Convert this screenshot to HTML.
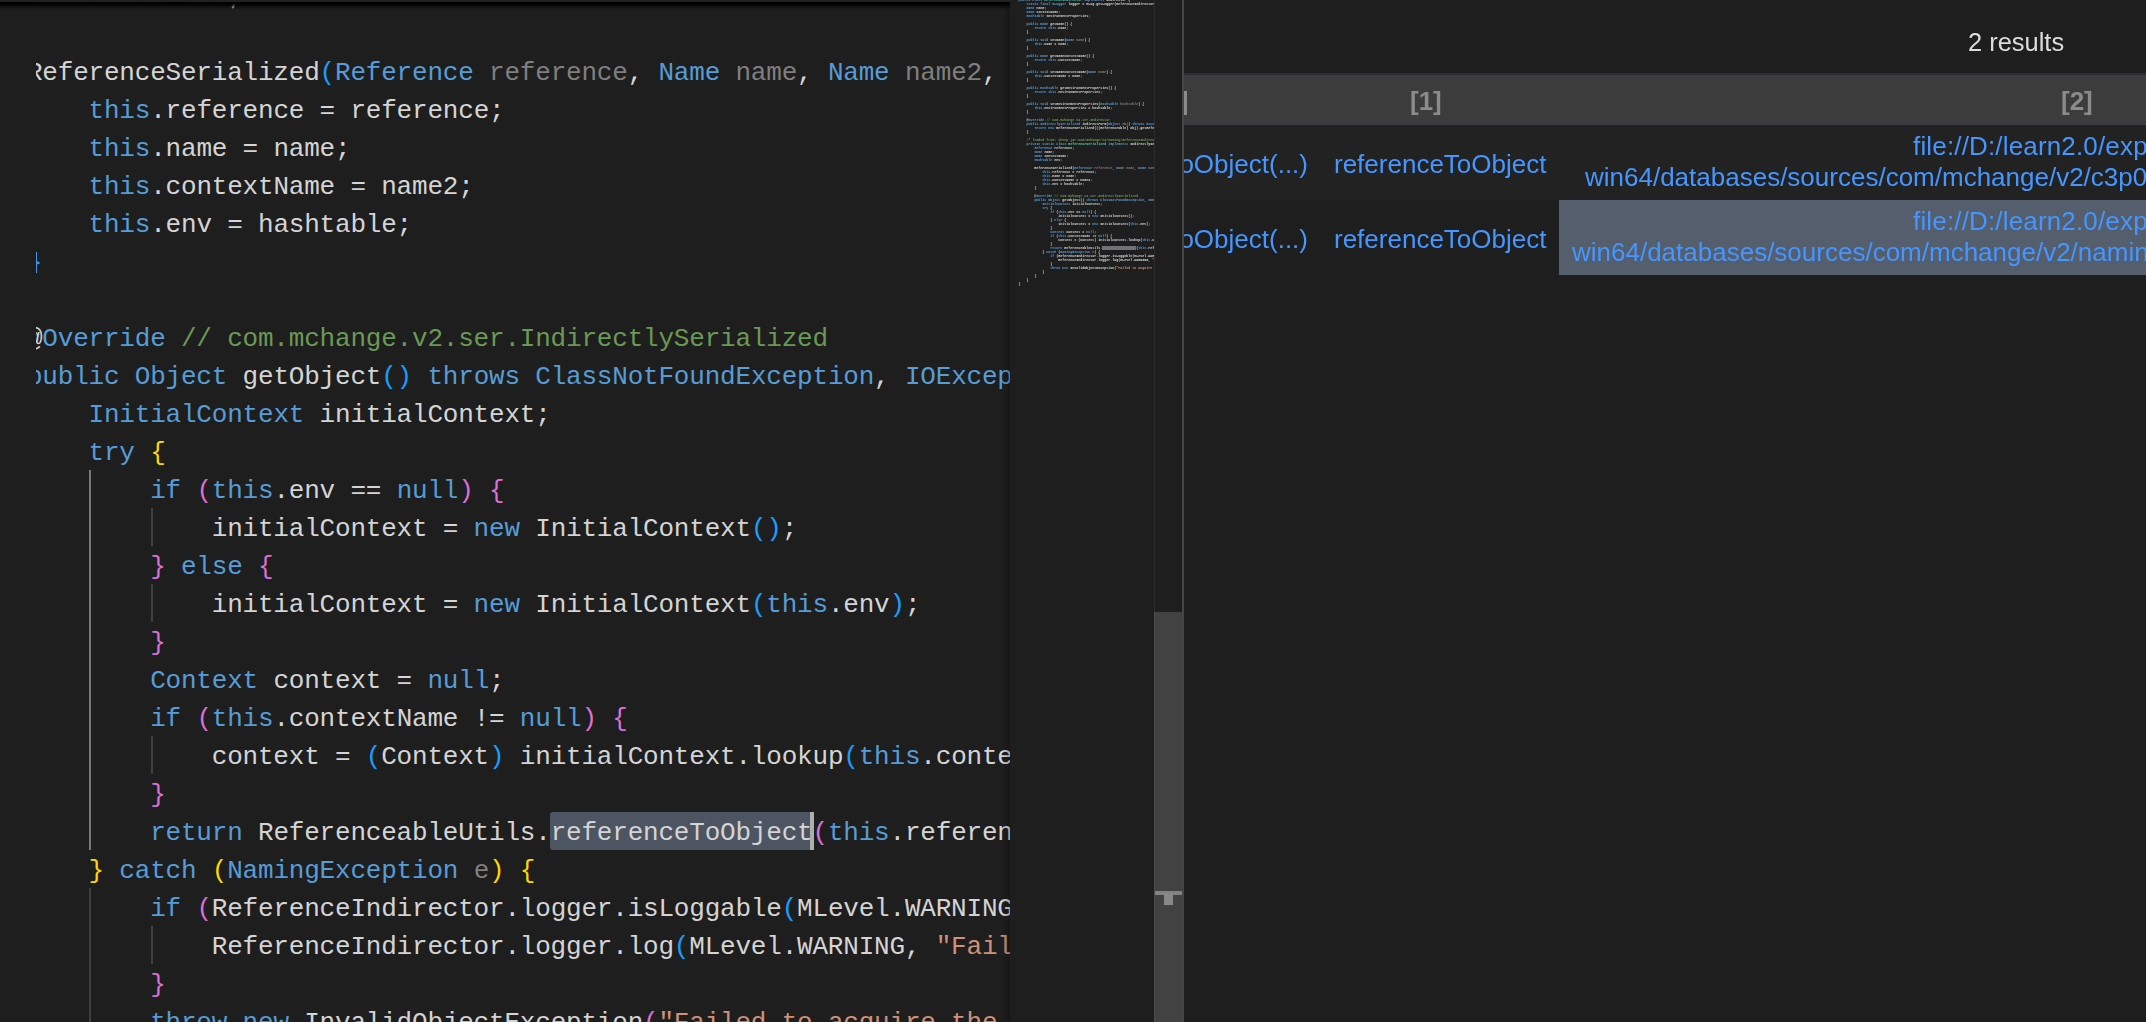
<!DOCTYPE html>
<html><head><meta charset="utf-8"><title>editor</title>
<style>
html,body{margin:0;padding:0;background:#1e1e1e;}
body{width:2146px;height:1022px;position:relative;overflow:hidden;font-family:"Liberation Sans",sans-serif;}
i{font-style:normal}
.k{color:#569cd6}.c{color:#6a9955}.s{color:#ce9178}.v{color:#7f7f7f}.t{color:#4ec9b0}
.g{color:#ffd700}.p{color:#da70d6}.b{color:#179fff}
#ed{position:absolute;left:36px;top:0;width:974px;height:1022px;overflow:hidden;}
#code{position:absolute;left:-132.3px;top:-21.75px;margin:0;
  font-family:"Liberation Mono",monospace;font-size:26px;letter-spacing:-0.2px;line-height:38px;color:#d4d4d4;white-space:pre;}
#code div{height:38px}
.gd{position:absolute;width:2px;background:#404040}
.ga{background:#787878}
#sel{position:absolute;left:550px;top:812px;width:262px;height:38px;background:#4d5562;border-radius:3px}
#cur{position:absolute;left:810px;top:812px;width:4px;height:38px;background:#aeafad}
#topst{position:absolute;left:0;top:0;width:1010px;height:2px;background:linear-gradient(#232323,#1f1f1f)}
#topsh{position:absolute;left:0;top:2px;width:1010px;height:8px;background:linear-gradient(rgba(0,0,0,1) 0%,rgba(0,0,0,0.97) 25%,rgba(0,0,0,0.6) 50%,rgba(0,0,0,0.2) 75%,rgba(0,0,0,0) 100%)}
#mmsh{position:absolute;left:1002px;top:2px;width:8px;height:1022px;background:linear-gradient(90deg,rgba(0,0,0,0),rgba(0,0,0,0.25))}
#mm{position:absolute;left:1010px;top:0;width:144px;height:1022px;overflow:hidden;background:#1e1e1e;will-change:transform}
#mmc{position:absolute;left:8.399999999999977px;top:-2.5px;margin:0;font-family:"Liberation Mono",monospace;font-size:3.333px;line-height:4px;color:#d4d4d4;white-space:pre;font-weight:bold}
#mmc .g,#mmc .p,#mmc .b{color:#d4d4d4}
#mmc div{height:4px}
#sb{position:absolute;left:1154px;top:0;width:1px;height:1022px;background:rgba(127,127,127,0.14)}
#sl{position:absolute;left:1154px;top:612px;width:28px;height:410px;background:#424242}
#mk1{position:absolute;left:1155px;top:891px;width:27px;height:4px;background:#828280}
#mk2{position:absolute;left:1164px;top:893px;width:9px;height:12px;background:#888}
#bd{position:absolute;left:1182px;top:0;width:2px;height:1022px;background:#464646}
#rp{position:absolute;left:1184px;top:0;width:962px;height:1022px;overflow:hidden;background:#1e1e1e;color:#4596ff;font-size:26px;white-space:nowrap;will-change:transform}
#rp div{position:absolute}
</style></head>
<body>
<div id="ed">
<div id="sel" style="left:514px"></div>
<div class="gd ga" style="left:53px;top:470px;height:380px"></div>
<div class="gd" style="left:53px;top:888px;height:134px"></div>
<div class="gd" style="left:115px;top:508px;height:38px"></div>
<div class="gd" style="left:115px;top:584px;height:38px"></div>
<div class="gd" style="left:115px;top:736px;height:38px"></div>
<div class="gd" style="left:115px;top:926px;height:38px"></div>
<div id="code"><div>        <i class="k">Hashtable </i>env;</div><div></div><div>        ReferenceSerialized<i class="b">(</i><i class="k">Reference </i><i class="v">reference</i>, <i class="k">Name </i><i class="v">name</i>, <i class="k">Name </i><i class="v">name2</i>, <i class="k">Hashtable </i><i class="v">hashtable</i><i class="b">) {</i></div><div>            <i class="k">this</i>.reference = reference;</div><div>            <i class="k">this</i>.name = name;</div><div>            <i class="k">this</i>.contextName = name2;</div><div>            <i class="k">this</i>.env = hashtable;</div><div>        <i class="b">}</i></div><div></div><div>        @<i class="k">Override </i><i class="c">// com.mchange.v2.ser.IndirectlySerialized</i></div><div>        <i class="k">public Object </i>getObject<i class="b">() </i><i class="k">throws ClassNotFoundException</i>, <i class="k">IOException </i><i class="b">{</i></div><div>            <i class="k">InitialContext </i>initialContext;</div><div>            <i class="k">try </i><i class="g">{</i></div><div>                <i class="k">if </i><i class="p">(</i><i class="k">this</i>.env == <i class="k">null</i><i class="p">) {</i></div><div>                    initialContext = <i class="k">new </i>InitialContext<i class="b">()</i>;</div><div>                <i class="p">} </i><i class="k">else </i><i class="p">{</i></div><div>                    initialContext = <i class="k">new </i>InitialContext<i class="b">(</i><i class="k">this</i>.env<i class="b">)</i>;</div><div>                <i class="p">}</i></div><div>                <i class="k">Context </i>context = <i class="k">null</i>;</div><div>                <i class="k">if </i><i class="p">(</i><i class="k">this</i>.contextName != <i class="k">null</i><i class="p">) {</i></div><div>                    context = <i class="b">(</i>Context<i class="b">) </i>initialContext.lookup<i class="b">(</i><i class="k">this</i>.contextName<i class="b">)</i>;</div><div>                <i class="p">}</i></div><div>                <i class="k">return </i>ReferenceableUtils.referenceToObject<i class="p">(</i><i class="k">this</i>.reference, <i class="k">this</i>.name, context, <i class="k">this</i>.env<i class="p">)</i>;</div><div>            <i class="g">} </i><i class="k">catch </i><i class="g">(</i><i class="k">NamingException </i><i class="v">e</i><i class="g">) {</i></div><div>                <i class="k">if </i><i class="p">(</i>ReferenceIndirector.logger.isLoggable<i class="b">(</i>MLevel.WARNING<i class="b">)</i><i class="p">) {</i></div><div>                    ReferenceIndirector.logger.log<i class="b">(</i>MLevel.WARNING, <i class="s">"Failed to acquire the Context necessary to lookup an Object."</i>, e<i class="b">)</i>;</div><div>                <i class="p">}</i></div><div>                <i class="k">throw new </i>InvalidObjectException<i class="p">(</i><i class="s">"Failed to acquire the Context necessary to lookup an Object: " </i>+ e.toString<i class="b">()</i><i class="p">)</i>;</div></div>
<div style="position:absolute;left:0;top:252px;width:1px;height:21px;background:#3f96e8"></div>
<div id="cur" style="left:774px"></div>
</div>
<div id="topst"></div><div id="topsh"></div><div id="mmsh"></div>
<div id="mm"><div id="mmc"><div><i class="k">public class </i><i class="t">ReferenceIndirector </i><i class="k">implements </i>Indirector <i class="g">{</i></div><div>    <i class="k">static final MLogger </i>logger = MLog.getLogger<i class="p">(</i>ReferenceIndirector.<i class="k">class</i><i class="p">)</i>;</div><div>    <i class="k">Name </i>name;</div><div>    <i class="k">Name </i>contextName;</div><div>    <i class="k">Hashtable </i>environmentProperties;</div><div></div><div>    <i class="k">public Name </i>getName<i class="p">() {</i></div><div>        <i class="k">return this</i>.name;</div><div>    <i class="p">}</i></div><div></div><div>    <i class="k">public void </i>setName<i class="p">(</i><i class="k">Name </i><i class="v">name</i><i class="p">) {</i></div><div>        <i class="k">this</i>.name = name;</div><div>    <i class="p">}</i></div><div></div><div>    <i class="k">public Name </i>getNameContextName<i class="p">() {</i></div><div>        <i class="k">return this</i>.contextName;</div><div>    <i class="p">}</i></div><div></div><div>    <i class="k">public void </i>setNameContextName<i class="p">(</i><i class="k">Name </i><i class="v">name</i><i class="p">) {</i></div><div>        <i class="k">this</i>.contextName = name;</div><div>    <i class="p">}</i></div><div></div><div>    <i class="k">public Hashtable </i>getEnvironmentProperties<i class="p">() {</i></div><div>        <i class="k">return this</i>.environmentProperties;</div><div>    <i class="p">}</i></div><div></div><div>    <i class="k">public void </i>setEnvironmentProperties<i class="p">(</i><i class="k">Hashtable </i><i class="v">hashtable</i><i class="p">) {</i></div><div>        <i class="k">this</i>.environmentProperties = hashtable;</div><div>    <i class="p">}</i></div><div></div><div>    @<i class="k">Override </i><i class="c">// com.mchange.v2.ser.Indirector</i></div><div>    <i class="k">public IndirectlySerialized </i>indirectForm<i class="p">(</i><i class="k">Object </i><i class="v">obj</i><i class="p">) </i><i class="k">throws Exception </i><i class="p">{</i></div><div>        <i class="k">return new </i>ReferenceSerialized<i class="b">(</i><i class="g">(</i><i class="p">(</i>Referenceable<i class="p">) </i>obj<i class="g">)</i>.getReference<i class="g">()</i>, <i class="k">this</i>.name, <i class="k">this</i>.contextName, <i class="k">this</i>.environmentProperties<i class="b">)</i>;</div><div>    <i class="p">}</i></div><div></div><div>    <i class="c">/* loaded from: sheep.jar:com/mchange/v2/naming/ReferenceIndirector$ReferenceSerialized.class */</i></div><div>    <i class="k">private static class </i><i class="t">ReferenceSerialized </i><i class="k">implements </i>IndirectlySerialized <i class="p">{</i></div><div>        <i class="k">Reference </i>reference;</div><div>        <i class="k">Name </i>name;</div><div>        <i class="k">Name </i>contextName;</div><div>        <i class="k">Hashtable </i>env;</div><div></div><div>        ReferenceSerialized<i class="b">(</i><i class="k">Reference </i><i class="v">reference</i>, <i class="k">Name </i><i class="v">name</i>, <i class="k">Name </i><i class="v">name2</i>, <i class="k">Hashtable </i><i class="v">hashtable</i><i class="b">) {</i></div><div>            <i class="k">this</i>.reference = reference;</div><div>            <i class="k">this</i>.name = name;</div><div>            <i class="k">this</i>.contextName = name2;</div><div>            <i class="k">this</i>.env = hashtable;</div><div>        <i class="b">}</i></div><div></div><div>        @<i class="k">Override </i><i class="c">// com.mchange.v2.ser.IndirectlySerialized</i></div><div>        <i class="k">public Object </i>getObject<i class="b">() </i><i class="k">throws ClassNotFoundException</i>, <i class="k">IOException </i><i class="b">{</i></div><div>            <i class="k">InitialContext </i>initialContext;</div><div>            <i class="k">try </i><i class="g">{</i></div><div>                <i class="k">if </i><i class="p">(</i><i class="k">this</i>.env == <i class="k">null</i><i class="p">) {</i></div><div>                    initialContext = <i class="k">new </i>InitialContext<i class="b">()</i>;</div><div>                <i class="p">} </i><i class="k">else </i><i class="p">{</i></div><div>                    initialContext = <i class="k">new </i>InitialContext<i class="b">(</i><i class="k">this</i>.env<i class="b">)</i>;</div><div>                <i class="p">}</i></div><div>                <i class="k">Context </i>context = <i class="k">null</i>;</div><div>                <i class="k">if </i><i class="p">(</i><i class="k">this</i>.contextName != <i class="k">null</i><i class="p">) {</i></div><div>                    context = <i class="b">(</i>Context<i class="b">) </i>initialContext.lookup<i class="b">(</i><i class="k">this</i>.contextName<i class="b">)</i>;</div><div>                <i class="p">}</i></div><div>                <i class="k">return </i>ReferenceableUtils.<span style="background:#707276;color:#707276">referenceToObject</span><i class="p">(</i><i class="k">this</i>.reference, <i class="k">this</i>.name, context, <i class="k">this</i>.env<i class="p">)</i>;</div><div>            <i class="g">} </i><i class="k">catch </i><i class="g">(</i><i class="k">NamingException </i><i class="v">e</i><i class="g">) {</i></div><div>                <i class="k">if </i><i class="p">(</i>ReferenceIndirector.logger.isLoggable<i class="b">(</i>MLevel.WARNING<i class="b">)</i><i class="p">) {</i></div><div>                    ReferenceIndirector.logger.log<i class="b">(</i>MLevel.WARNING, <i class="s">"Failed to acquire the Context necessary to lookup an Object."</i>, e<i class="b">)</i>;</div><div>                <i class="p">}</i></div><div>                <i class="k">throw new </i>InvalidObjectException<i class="p">(</i><i class="s">"Failed to acquire the Context necessary to lookup an Object: " </i>+ e.toString<i class="b">()</i><i class="p">)</i>;</div><div>            <i class="g">}</i></div><div>        <i class="b">}</i></div><div>    <i class="p">}</i></div><div><i class="g">}</i></div></div></div>
<div id="sl"></div><div id="sb"></div><div id="mk1"></div><div id="mk2"></div><div id="bd"></div>
<div id="rp"><div style="left:0;top:73px;width:962px;height:52px;background:#3c3c3c;border-top:2px solid #2d2f33;border-bottom:2px solid #393d41;box-sizing:border-box"></div>
<div style="left:0;top:125px;width:962px;height:75px;background:#222222"></div>
<div style="left:375px;top:200px;width:587px;height:75px;background:#545e6c"></div>
<div style="left:784px;top:22.6px;color:#dcdcdc;font-size:25.45px;line-height:38px">2 results</div>
<div style="left:-4.2px;top:84px;color:#8b8b8b;font-weight:bold;font-size:26px;line-height:34px">]</div>
<div style="left:226px;top:84px;color:#8b8b8b;font-weight:bold;font-size:26px;line-height:34px">[1]</div>
<div style="left:877px;top:84px;color:#8b8b8b;font-weight:bold;font-size:26px;line-height:34px">[2]</div>
<div style="right:838px;top:148px;line-height:32px">referenceToObject(...)</div>
<div style="left:150px;top:148px;line-height:32px">referenceToObject</div>
<div style="left:729px;top:130px;line-height:32px;letter-spacing:0.16px">file://D:/learn2.0/exploit/codeql-</div>
<div style="left:401px;top:161px;line-height:32px">win64/databases/sources/com/mchange/v2/c3p0/impl/</div>
<div style="right:838px;top:223px;line-height:32px">referenceToObject(...)</div>
<div style="left:150px;top:223px;line-height:32px">referenceToObject</div>
<div style="left:729px;top:205px;line-height:32px;letter-spacing:0.16px">file://D:/learn2.0/exploit/codeql-</div>
<div style="left:388px;top:236px;line-height:32px">win64/databases/sources/com/mchange/v2/naming/Ref</div></div>
</body></html>
